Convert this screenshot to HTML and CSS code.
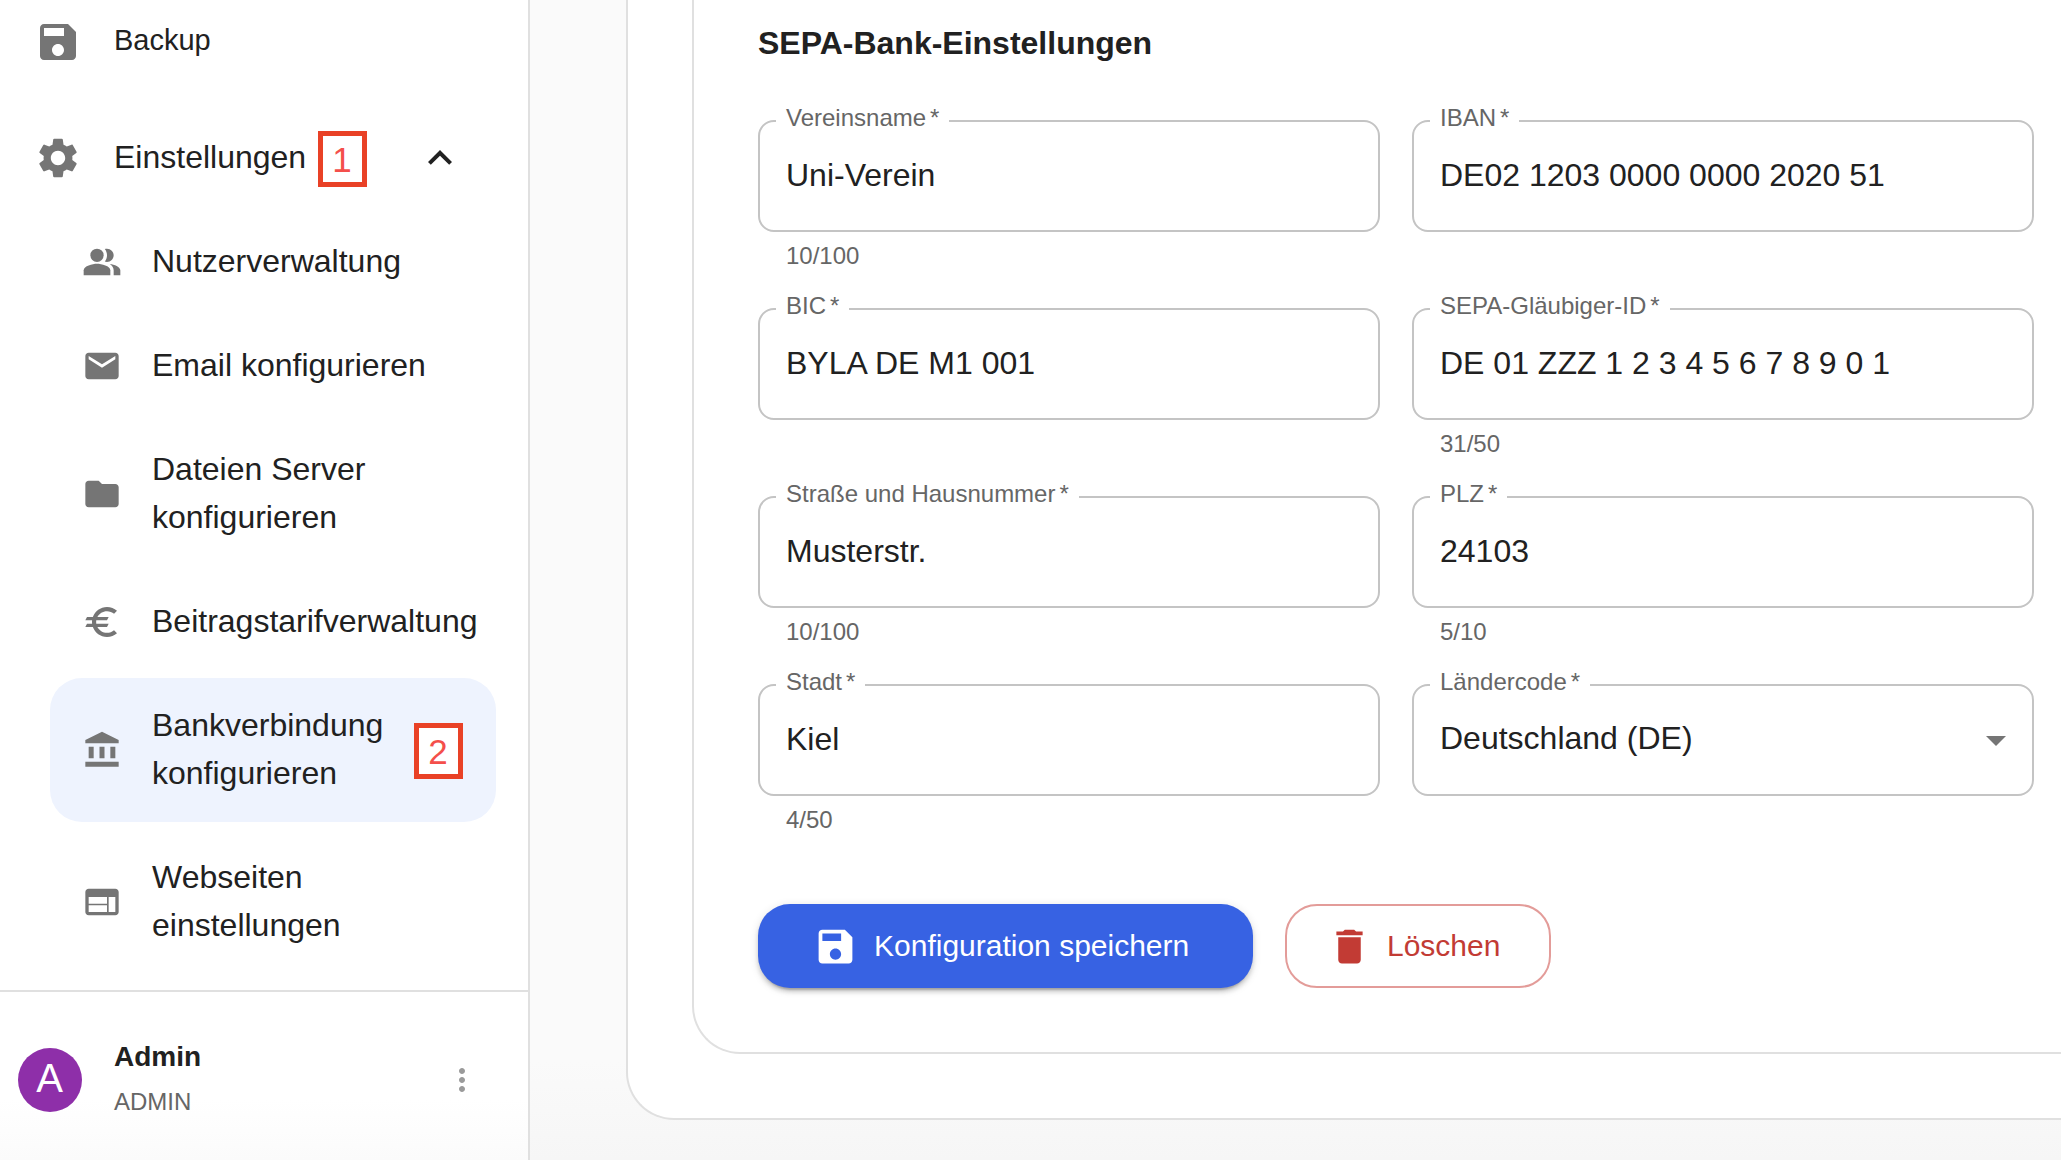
FILE: index.html
```html
<!DOCTYPE html>
<html lang="de">
<head>
  <meta charset="UTF-8">
  <title>Bankverbindung konfigurieren</title>
  <link rel="stylesheet" href="styles.css">
</head>
<body>

<aside class="sidebar">
  <nav class="nav">
    <a class="item item-backup">
      <svg class="icon" viewBox="0 0 24 24"><path d="M17 3H5c-1.11 0-2 .9-2 2v14c0 1.1.89 2 2 2h14c1.1 0 2-.9 2-2V7zm-5 16c-1.66 0-3-1.34-3-3s1.34-3 3-3 3 1.34 3 3-1.34 3-3 3m3-10H5V5h10z"/></svg>
      <span>Backup</span>
    </a>
    <a class="item">
      <svg class="icon" viewBox="0 0 24 24"><path d="M19.14 12.94c.04-.3.06-.61.06-.94 0-.32-.02-.64-.07-.94l2.03-1.58c.18-.14.23-.41.12-.61l-1.92-3.32c-.12-.22-.37-.29-.59-.22l-2.39.96c-.5-.38-1.03-.7-1.62-.94l-.36-2.54c-.04-.24-.24-.41-.48-.41h-3.84c-.24 0-.43.17-.47.41l-.36 2.54c-.59.24-1.13.57-1.62.94l-2.39-.96c-.22-.08-.47 0-.59.22L2.74 8.87c-.12.21-.08.47.12.61l2.03 1.58c-.05.3-.09.63-.09.94s.02.64.07.94l-2.03 1.58c-.18.14-.23.41-.12.61l1.92 3.32c.12.22.37.29.59.22l2.39-.96c.5.38 1.03.7 1.62.94l.36 2.54c.05.24.24.41.48.41h3.84c.24 0 .44-.17.47-.41l.36-2.54c.59-.24 1.13-.56 1.62-.94l2.39.96c.22.08.47 0 .59-.22l1.92-3.32c.12-.22.07-.47-.12-.61zM12 15.6c-1.98 0-3.6-1.62-3.6-3.6s1.62-3.6 3.6-3.6 3.6 1.62 3.6 3.6-1.62 3.6-3.6 3.6"/></svg>
      <span>Einstellungen</span>
      <svg class="icon chevron" viewBox="0 0 24 24"><path d="m12 8-6 6 1.41 1.41L12 10.83l4.59 4.58L18 14z"/></svg>
      <b class="step step-1">1</b>
    </a>

    <div class="submenu">
      <a class="sub">
        <svg class="icon" viewBox="0 0 24 24"><path d="M16.67 13.13C18.04 14.06 19 15.32 19 17v3h4v-3c0-2.18-3.57-3.47-6.33-3.87M15 12c2.21 0 4-1.79 4-4s-1.79-4-4-4c-.47 0-.91.1-1.33.24C14.5 5.27 15 6.58 15 8s-.5 2.73-1.33 3.76c.42.14.86.24 1.33.24"/><circle cx="9" cy="8" r="4"/><path d="M9 13c-2.67 0-8 1.34-8 4v3h16v-3c0-2.66-5.33-4-8-4"/></svg>
        <span>Nutzerverwaltung</span>
      </a>
      <a class="sub">
        <svg class="icon" viewBox="0 0 24 24"><path d="M20 4H4c-1.1 0-1.99.9-1.99 2L2 18c0 1.1.9 2 2 2h16c1.1 0 2-.9 2-2V6c0-1.1-.9-2-2-2m0 4-8 5-8-5V6l8 5 8-5z"/></svg>
        <span>Email konfigurieren</span>
      </a>
      <a class="sub">
        <svg class="icon" viewBox="0 0 24 24"><path d="M10 4H4c-1.1 0-1.99.9-1.99 2L2 18c0 1.1.9 2 2 2h16c1.1 0 2-.9 2-2V8c0-1.1-.9-2-2-2h-8z"/></svg>
        <span>Dateien Server<br>konfigurieren</span>
      </a>
      <a class="sub">
        <svg class="icon" viewBox="0 0 24 24"><path d="M15 18.5c-2.51 0-4.68-1.42-5.76-3.5H15l1-2H8.58c-.05-.33-.08-.66-.08-1s.03-.67.08-1H15l1-2H9.24C10.32 6.92 12.5 5.5 15 5.5c1.61 0 3.09.59 4.23 1.57L21 5.3C19.41 3.87 17.3 3 15 3c-3.92 0-7.24 2.51-8.48 6H3l-1 2h4.06c-.04.33-.06.66-.06 1s.02.67.06 1H3l-1 2h4.52c1.24 3.49 4.56 6 8.48 6 2.31 0 4.41-.87 6-2.3l-1.78-1.77c-1.13.98-2.6 1.57-4.22 1.57"/></svg>
        <span>Beitragstarifverwaltung</span>
      </a>
      <a class="sub active">
        <svg class="icon" viewBox="0 0 24 24"><path d="M4 10h3v7H4zm6.5 0h3v7h-3zM2 19h20v3H2zm15-9h3v7h-3zm-5-9L2 6v2h20V6z"/></svg>
        <span>Bankverbindung<br>konfigurieren</span>
        <b class="step step-2">2</b>
      </a>
      <a class="sub">
        <svg class="icon" viewBox="0 0 24 24"><path d="M20 4H4c-1.1 0-1.99.9-1.99 2L2 18c0 1.1.9 2 2 2h16c1.1 0 2-.9 2-2V6c0-1.1-.9-2-2-2m-5 14H4v-4h11zm0-5H4V9h11zm5 5h-4V9h4z"/></svg>
        <span>Webseiten<br>einstellungen</span>
      </a>
    </div>
  </nav>

  <div class="user">
    <div class="avatar">A</div>
    <div class="user-text">
      <div class="user-name">Admin</div>
      <div class="user-role">ADMIN</div>
    </div>
    <svg class="dots" viewBox="0 0 24 24"><path d="M12 8c1.1 0 2-.9 2-2s-.9-2-2-2-2 .9-2 2 .9 2 2 2m0 2c-1.1 0-2 .9-2 2s.9 2 2 2 2-.9 2-2-.9-2-2-2m0 6c-1.1 0-2 .9-2 2s.9 2 2 2 2-.9 2-2-.9-2-2-2"/></svg>
  </div>
</aside>

<main class="main">
  <div class="card">
    <div class="panel">
      <h2>SEPA-Bank-Einstellungen</h2>

      <div class="form">
        <div class="field">
          <label>Vereinsname<i>*</i></label>
          <div class="value">Uni-Verein</div>
          <p class="hint">10/100</p>
        </div>
        <div class="field">
          <label>IBAN<i>*</i></label>
          <div class="value">DE02 1203 0000 0000 2020 51</div>
        </div>
        <div class="field">
          <label>BIC<i>*</i></label>
          <div class="value">BYLA DE M1 001</div>
        </div>
        <div class="field">
          <label>SEPA-Gläubiger-ID<i>*</i></label>
          <div class="value">DE 01 ZZZ 1 2 3 4 5 6 7 8 9 0 1</div>
          <p class="hint">31/50</p>
        </div>
        <div class="field">
          <label>Straße und Hausnummer<i>*</i></label>
          <div class="value">Musterstr.</div>
          <p class="hint">10/100</p>
        </div>
        <div class="field">
          <label>PLZ<i>*</i></label>
          <div class="value">24103</div>
          <p class="hint">5/10</p>
        </div>
        <div class="field">
          <label>Stadt<i>*</i></label>
          <div class="value">Kiel</div>
          <p class="hint">4/50</p>
        </div>
        <div class="field">
          <label>Ländercode<i>*</i></label>
          <div class="value select">
            <span>Deutschland (DE)</span>
            <svg class="icon" viewBox="0 0 24 24"><path d="m7 10 5 5 5-5z"/></svg>
          </div>
        </div>
      </div>

      <div class="actions">
        <button class="btn btn-save">
          <svg viewBox="0 0 24 24"><path d="M17 3H5c-1.11 0-2 .9-2 2v14c0 1.1.89 2 2 2h14c1.1 0 2-.9 2-2V7zm-5 16c-1.66 0-3-1.34-3-3s1.34-3 3-3 3 1.34 3 3-1.34 3-3 3m3-10H5V5h10z"/></svg>
          <span>Konfiguration speichern</span>
        </button>
        <button class="btn btn-delete">
          <svg viewBox="0 0 24 24"><path d="M6 19c0 1.1.9 2 2 2h8c1.1 0 2-.9 2-2V7H6zM19 4h-3.5l-1-1h-5l-1 1H5v2h14z"/></svg>
          <span>Löschen</span>
        </button>
      </div>
    </div>
  </div>
</main>

</body>
</html>
```

FILE: styles.css
```css
* { box-sizing: border-box; }
body {
  margin: 0;
  height: 1160px;
  display: flex;
  font-family: "Liberation Sans", Arial, sans-serif;
  font-size: 32px;
  line-height: 48px;
  color: #212121;
  background: linear-gradient(#fafafa 1060px, #f6f6f6);
}

/* sidebar */
.sidebar {
  width: 530px;
  flex: none;
  display: flex;
  flex-direction: column;
  border-right: 2px solid #e0e0e0;
  background: linear-gradient(#fff 1100px, #fbfbfb);
}
.nav { height: 990px; flex: none; }
.icon { width: 48px; height: 48px; flex: none; fill: #757575; }
.item {
  position: relative;
  display: flex;
  align-items: center;
  height: 96px;
  padding: 0 64px 0 34px;
}
.item span { margin: -2px 0 0 32px; }
.item-backup { height: 84px; margin-bottom: 26px; font-size: 29px; }
.item-backup span { margin-top: -4px; }
.chevron { margin-left: auto; fill: #212121; }

.submenu {
  display: flex;
  flex-direction: column;
  gap: 8px;
  padding: 8px 32px 0 50px;
}
.sub {
  position: relative;
  display: flex;
  align-items: center;
  padding: 24px 0 24px 32px;
  border-radius: 32px;
}
.sub span { margin: -1px 0 1px 30px; white-space: nowrap; }
.sub .icon { width: 40px; height: 40px; }
.active { background: #eef3fe; }

.step {
  position: absolute;
  width: 49px;
  height: 56px;
  border: 5px solid #e94126;
  background: #fff;
  color: #f44f4b;
  font-size: 35px;
  font-weight: normal;
  line-height: 47px;
  text-indent: -1px;
  text-align: center;
}
.step-1 { left: 318px; top: 21px; }
.step-2 { left: 364px; top: 45px; }

.user {
  flex: 1;
  display: flex;
  align-items: center;
  padding: 8px 48px 0 18px;
  border-top: 2px solid #e0e0e0;
}
.avatar {
  width: 64px;
  height: 64px;
  border-radius: 50%;
  background: #8e2fa9;
  color: #fff;
  font-size: 40px;
  line-height: 61px;
  text-indent: -1px;
  text-align: center;
}
.user-text { margin: -5px 0 0 32px; }
.user-name { font-size: 28px; font-weight: bold; line-height: 48px; }
.user-role { font-size: 24px; line-height: 42px; color: #666; }
.dots { width: 36px; height: 36px; margin-left: auto; fill: #9a9a9a; }

/* bank form */
.main { flex: 1; padding-left: 96px; }
.card {
  height: 1120px;
  padding: 0 0 64px 64px;
  border: solid #e0e0e0;
  border-width: 0 0 2px 2px;
  border-radius: 0 0 0 48px;
  background: #fff;
}
.panel {
  height: 1054px;
  padding: 19px 0 0 64px;
  border: solid #e0e0e0;
  border-width: 0 0 2px 2px;
  border-radius: 0 0 0 48px;
}
h2 { margin: 0 0 53px; font-size: 32px; line-height: 48px; }

.form {
  display: grid;
  grid-template-columns: 622px 622px;
  grid-auto-rows: 188px;
  column-gap: 32px;
}
.field { position: relative; }
.field label {
  position: absolute;
  left: 18px;
  top: -19px;
  padding: 0 10px;
  background: #fff;
  color: #666;
  font-size: 24px;
  line-height: 34px;
}
.field i { margin-left: 4px; font-style: normal; }
.value {
  height: 112px;
  padding: 29px 26px;
  border: 2px solid #c4c4c4;
  border-radius: 16px;
}
.select { display: flex; justify-content: space-between; padding-right: 12px; }
.select span { margin-top: -1px; }
.select .icon { margin-top: 1px; }
.hint { margin: 4px 28px 0; font-size: 24px; line-height: 40px; color: #666; }

.actions { display: flex; gap: 32px; margin-top: 32px; }
.btn {
  display: flex;
  align-items: center;
  height: 84px;
  border: 0;
  border-radius: 32px;
  background: none;
  font: 30px/48px "Liberation Sans", Arial, sans-serif;
}
.btn svg { width: 45px; height: 45px; fill: currentColor; }
.btn span { margin-left: 16px; }
.btn-save {
  width: 495px;
  padding: 0 0 0 55px;
  background: #3762e3;
  color: #fff;
  box-shadow: 0 6px 2px -4px rgba(0,0,0,.2), 0 4px 4px rgba(0,0,0,.14), 0 2px 10px rgba(0,0,0,.12);
}
.btn-delete {
  width: 266px;
  padding: 0 0 0 40px;
  border: 2px solid #e39c99;
  color: #c23b34;
}
.btn-delete span { margin-left: 15px; }
```
